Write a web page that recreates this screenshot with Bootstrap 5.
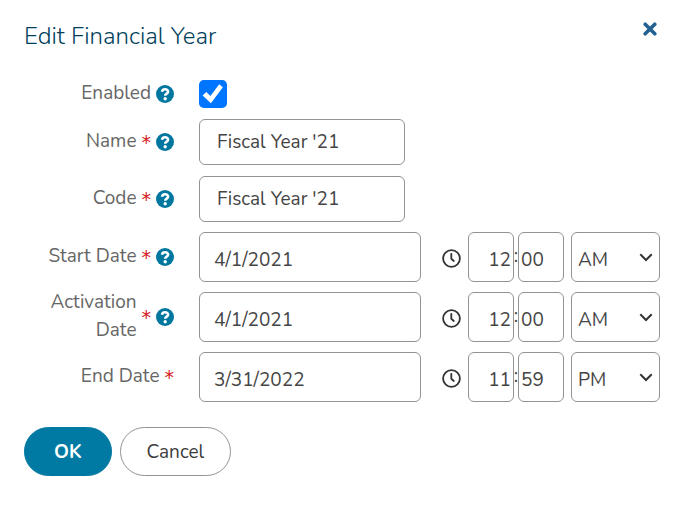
<!DOCTYPE html>
<html lang="en">
<head>
<meta charset="utf-8">
<meta name="viewport" content="width=device-width, initial-scale=1">
<title>Edit Financial Year</title>
<link rel="stylesheet" href="https://cdn.jsdelivr.net/npm/bootstrap@5.3.0/dist/css/bootstrap.min.css">
<style>
body{font-family:Nunito,Lato,"Open Sans",sans-serif;font-size:19px;font-weight:400;line-height:28px;color:#444;background:#fff}
.dialog-body{padding:20px 18px 24px 24px}
.dialog-title{font-size:24px;line-height:32px;color:#003f5c;font-weight:300}
.close-btn{color:#236192;line-height:0;margin:2px 3px 0 0}
.field-list{gap:11px;margin-top:28px}
.field-row{gap:25px}
.label-cell{width:150px;gap:5px;flex:none;color:#666;padding-bottom:2px;margin-top:-4px;margin-bottom:-4px}
.req{color:#d41920;font-family:"DejaVu Sans",sans-serif;font-size:19px;line-height:20px;padding-top:2px}
.help-btn{line-height:0;color:#00779e}
.help-btn svg{margin-top:2px}
.check-box{width:28px;height:28px;margin:0;border:0;border-radius:3px}
.check-box:checked{background-color:#0075ff;background-image:url("data:image/svg+xml,%3Csvg xmlns='http://www.w3.org/2000/svg' viewBox='0 0 27 27'%3E%3Cpath d='M3.500 15L7 11.500L11 15.500L19.500 4L23 7L11.500 22.500Z' fill='white'/%3E%3C/svg%3E");background-size:100%}
.field-box{border:1px solid #939393;border-radius:6px;font-size:19px;font-weight:400;line-height:28px;color:#444}
.text-box{width:206px;height:46px;padding:0 17px}
.date-row{margin-top:-1px}
.date-box,.hour-box,.minute-box,.period-box{height:50px;padding:6px 0 0}
.date-box{padding-left:14px;flex:1 1 0;min-width:0}
.hour-box,.minute-box{width:46px}
.hour-box{text-align:right;padding-right:2px}
.minute-box{padding-left:2px}
.time-sep{width:4px;line-height:28px;display:flex;justify-content:center;padding-bottom:3px}
.clock-icon{margin:2px 7px 0 21px;flex:none}
.period-box{width:89px;margin-left:7px;padding-left:6px;background-position:right 6px center;background-size:14px 14px;background-image:url("data:image/svg+xml,%3Csvg xmlns='http://www.w3.org/2000/svg' viewBox='0 0 14 14'%3E%3Cpath d='M2 5l5 5 5-5' fill='none' stroke='%23333' stroke-width='2' stroke-linecap='square'/%3E%3C/svg%3E")}
.actions{gap:8px;margin-top:25px}
.pill-btn{height:49px;font-size:19px;font-weight:400;line-height:28px;padding:0 26px;border:1px solid #939393;color:#3c3c3c}
.pill-ok{background:#007aa3;border-color:#007aa3;color:#fff;font-weight:700;padding:0 29px}
</style>
<script src="https://cdn.jsdelivr.net/npm/bootstrap@5.3.0/dist/js/bootstrap.bundle.min.js"></script>
</head>
<body>
<svg class="d-none" aria-hidden="true">
<symbol id="help" viewBox="0 0 18 18"><circle cx="9" cy="9" r="9" fill="currentColor"/><path d="M6 6.700C6.300 4.900 7.500 4.300 9.100 4.300c1.700 0 3 .900 3 2.400C12.100 8.700 9.200 8.500 9.200 10.800" fill="none" stroke="#fff" stroke-width="2.600"/><circle cx="9.200" cy="13.700" r="1.700" fill="#fff"/></symbol>
<symbol id="clock" viewBox="0 0 19 19"><circle cx="9.500" cy="9.500" r="8.400" fill="none" stroke="#333" stroke-width="1.800"/><path d="M9.300 4.800v5l2.500 2.200" fill="none" stroke="#333" stroke-width="1.800" stroke-linecap="round" stroke-linejoin="round"/></symbol>
</svg>
<main class="dialog-body">
<header class="d-flex justify-content-between align-items-start">
<h1 class="dialog-title m-0">Edit Financial Year</h1>
<button type="button" class="btn p-0 border-0 close-btn" aria-label="Close"><svg width="14" height="14" viewBox="0 0 14 14"><path d="M2.200 2.200l9.600 9.600M11.800 2.200l-9.600 9.600" stroke="currentColor" stroke-width="3.600" stroke-linecap="round"/></svg></button>
</header>
<form>
<div class="field-list d-flex flex-column">
<div class="field-row d-flex align-items-center">
<div class="label-cell d-flex align-items-center justify-content-end text-end"><label for="enabled">Enabled</label><button type="button" class="btn p-0 border-0 help-btn" aria-label="Help: Enabled"><svg width="18" height="18"><use href="#help"/></svg></button></div>
<input id="enabled" type="checkbox" class="form-check-input check-box" checked>
</div>
<div class="field-row d-flex align-items-center">
<div class="label-cell d-flex align-items-center justify-content-end text-end"><label for="name">Name</label><span class="req">*</span><button type="button" class="btn p-0 border-0 help-btn" aria-label="Help: Name"><svg width="18" height="18"><use href="#help"/></svg></button></div>
<input id="name" type="text" class="form-control field-box text-box" value="Fiscal Year '21">
</div>
<div class="field-row d-flex align-items-center">
<div class="label-cell d-flex align-items-center justify-content-end text-end"><label for="code">Code</label><span class="req">*</span><button type="button" class="btn p-0 border-0 help-btn" aria-label="Help: Code"><svg width="18" height="18"><use href="#help"/></svg></button></div>
<input id="code" type="text" class="form-control field-box text-box" value="Fiscal Year '21">
</div>
<div class="field-row date-row d-flex align-items-center">
<div class="label-cell d-flex align-items-center justify-content-end text-end"><label for="start">Start Date</label><span class="req">*</span><button type="button" class="btn p-0 border-0 help-btn" aria-label="Help: Start Date"><svg width="18" height="18"><use href="#help"/></svg></button></div>
<div class="d-flex align-items-center flex-grow-1"><input id="start" type="text" class="form-control field-box date-box" value="4/1/2021"><svg class="clock-icon" width="19" height="19"><use href="#clock"/></svg><input type="text" class="form-control field-box hour-box" aria-label="Start hour" value="12"><span class="time-sep">:</span><input type="text" class="form-control field-box minute-box" aria-label="Start minute" value="00"><select class="form-select field-box period-box" aria-label="Start AM or PM"><option selected>AM</option><option>PM</option></select></div>
</div>
<div class="field-row date-row d-flex align-items-center">
<div class="label-cell d-flex align-items-center justify-content-end text-end"><label for="activation">Activation Date</label><span class="req">*</span><button type="button" class="btn p-0 border-0 help-btn" aria-label="Help: Activation Date"><svg width="18" height="18"><use href="#help"/></svg></button></div>
<div class="d-flex align-items-center flex-grow-1"><input id="activation" type="text" class="form-control field-box date-box" value="4/1/2021"><svg class="clock-icon" width="19" height="19"><use href="#clock"/></svg><input type="text" class="form-control field-box hour-box" aria-label="Activation hour" value="12"><span class="time-sep">:</span><input type="text" class="form-control field-box minute-box" aria-label="Activation minute" value="00"><select class="form-select field-box period-box" aria-label="Activation AM or PM"><option selected>AM</option><option>PM</option></select></div>
</div>
<div class="field-row date-row d-flex align-items-center">
<div class="label-cell d-flex align-items-center justify-content-end text-end"><label for="end">End Date</label><span class="req">*</span></div>
<div class="d-flex align-items-center flex-grow-1"><input id="end" type="text" class="form-control field-box date-box" value="3/31/2022"><svg class="clock-icon" width="19" height="19"><use href="#clock"/></svg><input type="text" class="form-control field-box hour-box" aria-label="End hour" value="11"><span class="time-sep">:</span><input type="text" class="form-control field-box minute-box" aria-label="End minute" value="59"><select class="form-select field-box period-box" aria-label="End AM or PM"><option>AM</option><option selected>PM</option></select></div>
</div>
</div>
<div class="actions d-flex">
<button type="submit" class="btn rounded-pill pill-btn pill-ok">OK</button>
<button type="button" class="btn rounded-pill pill-btn">Cancel</button>
</div>
</form>
</main>
</body>
</html>
